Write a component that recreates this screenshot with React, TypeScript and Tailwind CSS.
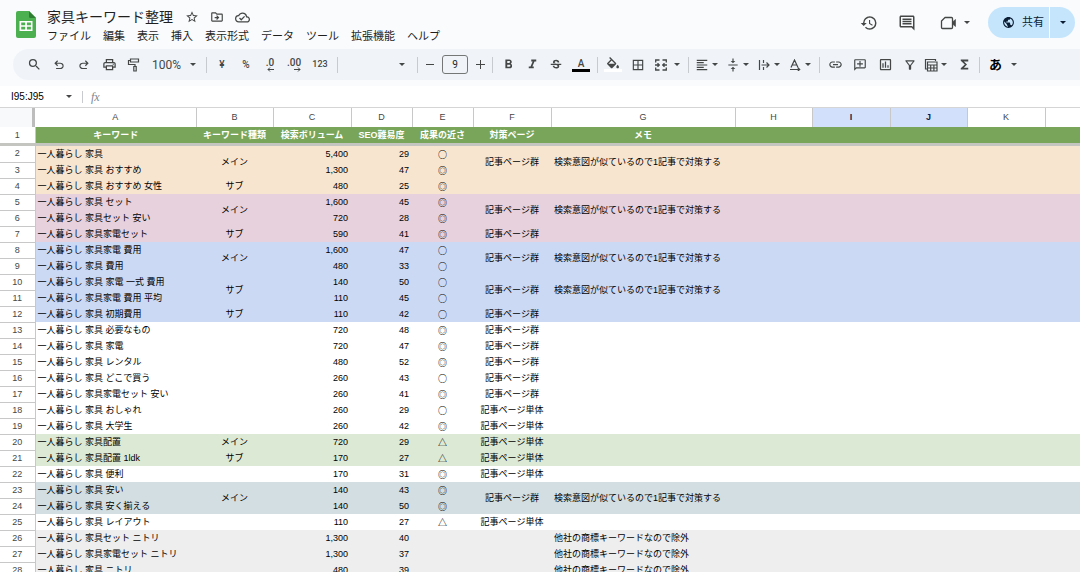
import type { ReactNode } from 'react';
import {
    MdBorderAll,
    MdFormatAlignLeft,
    MdFormatBold,
    MdFormatItalic,
    MdFunctions,
    MdHistory,
    MdLink,
    MdOutlineAddComment,
    MdOutlineCloudDone,
    MdOutlineComment,
    MdOutlineDriveFileMove,
    MdOutlineFilterAlt,
    MdOutlineInsertChart,
    MdOutlinePrint,
    MdPublic,
    MdSearch,
    MdStarBorder,
    MdStrikethroughS,
    MdVerticalAlignCenter,
} from 'react-icons/md';

const menus = ['ファイル', '編集', '表示', '挿入', '表示形式', 'データ', 'ツール', '拡張機能', 'ヘルプ'];

const columns = [
    { name: 'A', title: 'キーワード', width: 'w-[161px]' },
    { name: 'B', title: 'キーワード種類', width: 'w-[77px]' },
    { name: 'C', title: '検索ボリューム', width: 'w-[78px]' },
    { name: 'D', title: 'SEO難易度', width: 'w-[61px]' },
    { name: 'E', title: '成果の近さ', width: 'w-[61px]' },
    { name: 'F', title: '対策ページ', width: 'w-[78px]' },
    { name: 'G', title: 'メモ', width: 'w-[184px]' },
    { name: 'H', title: '', width: 'w-[77px]' },
    { name: 'I', title: '', width: 'w-[78px]' },
    { name: 'J', title: '', width: 'w-[77px]' },
    { name: 'K', title: '', width: 'w-[78px]' },
    { name: '', title: '', width: '' },
];

const SAME = '検索意図が似ているので1記事で対策する';
const BRAND = '他社の商標キーワードなので除外';

const ORANGE = 'bg-[#f8e5d0]';
const PINK = 'bg-[#e6d1dc]';
const BLUE = 'bg-[#ccd9f5]';
const WHITE = 'bg-white';
const GREEN = 'bg-[#dce9d5]';
const TEAL = 'bg-[#d2dee2]';
const GRAY = 'bg-[#eeeeee]';

type Row = {
    color: string;
    keyword: string;
    volume: string;
    difficulty: string;
    mark: string;
    // merge: 'start' spans two rows for kind / page / memo, 'end' is the covered row
    merge?: 'start' | 'end';
    kind?: string;
    page?: string;
    memo?: string;
};

const rows: Row[] = [
    { color: ORANGE, keyword: '一人暮らし 家具', volume: '5,400', difficulty: '29', mark: '○', merge: 'start', kind: 'メイン', page: '記事ページ群', memo: SAME },
    { color: ORANGE, keyword: '一人暮らし 家具 おすすめ', volume: '1,300', difficulty: '47', mark: '◎', merge: 'end' },
    { color: ORANGE, keyword: '一人暮らし 家具 おすすめ 女性', volume: '480', difficulty: '25', mark: '◎', kind: 'サブ' },
    { color: PINK, keyword: '一人暮らし 家具 セット', volume: '1,600', difficulty: '45', mark: '◎', merge: 'start', kind: 'メイン', page: '記事ページ群', memo: SAME },
    { color: PINK, keyword: '一人暮らし 家具セット 安い', volume: '720', difficulty: '28', mark: '◎', merge: 'end' },
    { color: PINK, keyword: '一人暮らし 家具家電セット', volume: '590', difficulty: '41', mark: '◎', kind: 'サブ', page: '記事ページ群' },
    { color: BLUE, keyword: '一人暮らし 家具家電 費用', volume: '1,600', difficulty: '47', mark: '○', merge: 'start', kind: 'メイン', page: '記事ページ群', memo: SAME },
    { color: BLUE, keyword: '一人暮らし 家具 費用', volume: '480', difficulty: '33', mark: '○', merge: 'end' },
    { color: BLUE, keyword: '一人暮らし 家具 家電 一式 費用', volume: '140', difficulty: '50', mark: '○', merge: 'start', kind: 'サブ', page: '記事ページ群', memo: SAME },
    { color: BLUE, keyword: '一人暮らし 家具家電 費用 平均', volume: '110', difficulty: '45', mark: '○', merge: 'end' },
    { color: BLUE, keyword: '一人暮らし 家具 初期費用', volume: '110', difficulty: '42', mark: '○', kind: 'サブ', page: '記事ページ群' },
    { color: WHITE, keyword: '一人暮らし 家具 必要なもの', volume: '720', difficulty: '48', mark: '◎', page: '記事ページ群' },
    { color: WHITE, keyword: '一人暮らし 家具 家電', volume: '720', difficulty: '47', mark: '◎', page: '記事ページ群' },
    { color: WHITE, keyword: '一人暮らし 家具 レンタル', volume: '480', difficulty: '52', mark: '◎', page: '記事ページ群' },
    { color: WHITE, keyword: '一人暮らし 家具 どこで買う', volume: '260', difficulty: '43', mark: '○', page: '記事ページ群' },
    { color: WHITE, keyword: '一人暮らし 家具家電セット 安い', volume: '260', difficulty: '41', mark: '◎', page: '記事ページ群' },
    { color: WHITE, keyword: '一人暮らし 家具 おしゃれ', volume: '260', difficulty: '29', mark: '○', page: '記事ページ単体' },
    { color: WHITE, keyword: '一人暮らし 家具 大学生', volume: '260', difficulty: '42', mark: '◎', page: '記事ページ単体' },
    { color: GREEN, keyword: '一人暮らし 家具配置', volume: '720', difficulty: '29', mark: '△', kind: 'メイン', page: '記事ページ単体' },
    { color: GREEN, keyword: '一人暮らし 家具配置 1ldk', volume: '170', difficulty: '27', mark: '△', kind: 'サブ', page: '記事ページ単体' },
    { color: WHITE, keyword: '一人暮らし 家具 便利', volume: '170', difficulty: '31', mark: '◎', page: '記事ページ単体' },
    { color: TEAL, keyword: '一人暮らし 家具 安い', volume: '140', difficulty: '43', mark: '◎', merge: 'start', kind: 'メイン', page: '記事ページ群', memo: SAME },
    { color: TEAL, keyword: '一人暮らし 家具 安く揃える', volume: '140', difficulty: '50', mark: '◎', merge: 'end' },
    { color: WHITE, keyword: '一人暮らし 家具 レイアウト', volume: '110', difficulty: '27', mark: '△', page: '記事ページ単体' },
    { color: GRAY, keyword: '一人暮らし 家具セット ニトリ', volume: '1,300', difficulty: '40', mark: '', memo: BRAND },
    { color: GRAY, keyword: '一人暮らし 家具家電セット ニトリ', volume: '1,300', difficulty: '37', mark: '', memo: BRAND },
    { color: GRAY, keyword: '一人暮らし 家具 ニトリ', volume: '480', difficulty: '39', mark: '', memo: BRAND },
];

function Caret() {
    return (
        <svg viewBox="0 0 6 3" className="w-1.5 h-[3px] shrink-0" fill="currentColor" aria-hidden="true">
            <path d="M0 0h6L3 3z" />
        </svg>
    );
}

function Divider() {
    return <span className="w-px h-4 mx-[3px] shrink-0 bg-[#c7cacf]" />;
}

function Tool({ label, children, width = 'w-6' }: { label: string; children: ReactNode; width?: string }) {
    return (
        <button aria-label={label} className={`${width} h-6 shrink-0 flex flex-col items-center justify-center`}>
            {children}
        </button>
    );
}

function DropTool({ label, children, gap = 'w-[31px]' }: { label: string; children: ReactNode; gap?: string }) {
    return (
        <button aria-label={label} className={`${gap} h-6 pl-px pr-[5px] shrink-0 flex items-center justify-between`}>
            <span className="w-[18px] flex justify-center">{children}</span>
            <Caret />
        </button>
    );
}

function Symbol({ d }: { d: string }) {
    return (
        <svg viewBox="0 -960 960 960" className="size-3.5" fill="currentColor" aria-hidden="true">
            <path d={d} />
        </svg>
    );
}

function Decimal({ text, right }: { text: string; right?: boolean }) {
    return (
        <span className="flex flex-col items-center text-[10px] leading-[9px] font-medium">
            {text}
            <svg viewBox="0 0 7 5" className={`w-[7px] h-[5px] self-end ${right ? '-scale-x-100' : ''}`} fill="none" stroke="currentColor" aria-hidden="true">
                <path d="M7 2.500H1M3 .5l-2 2 2 2" />
            </svg>
        </span>
    );
}

function SheetsLogo() {
    return (
        <svg viewBox="0 0 20 27" className="w-5 h-[27px] shrink-0" aria-hidden="true">
            <path fill="#4caf50" d="M2 0h11l7 7v18a2 2 0 0 1-2 2H2a2 2 0 0 1-2-2V2a2 2 0 0 1 2-2z" />
            <path fill="#2e7d32" d="M13 0l7 7h-5.500A1.500 1.500 0 0 1 13 5.500z" />
            <path fill="#fff" fillRule="evenodd" d="M3.500 10h13v10h-13zM5.200 11.600v2.600h4v-2.600zm5.700 0v2.600h4v-2.600zm-5.700 4.200v2.600h4v-2.600zm5.700 0v2.600h4v-2.600z" />
        </svg>
    );
}

function Header() {
    return (
        <header className="flex items-start justify-between h-[49px] pl-4 pr-[5px]">
            <div className="flex items-start gap-[11px] pt-2">
                <div className="pt-[3px]">
                    <SheetsLogo />
                </div>
                <div>
                    <div className="flex items-center h-[18px] text-[#444746]">
                        <h1 className="text-sm leading-[18px] text-[#1f1f1f] mr-3">家具キーワード整理</h1>
                        <div className="flex items-center gap-[11px]">
                            <button aria-label="スター"><MdStarBorder className="size-3.5" /></button>
                            <button aria-label="移動"><MdOutlineDriveFileMove className="size-3.5" /></button>
                            <button aria-label="保存済み"><MdOutlineCloudDone className="size-[15px]" /></button>
                        </div>
                    </div>
                    <nav className="flex gap-3 pt-0.5 text-[11px] leading-4 text-[#1f1f1f]">
                        {menus.map((menu) => (
                            <button key={menu} className="whitespace-nowrap">{menu}</button>
                        ))}
                    </nav>
                </div>
            </div>

            <div className="flex items-center pt-[7px] text-[#444746]">
                <button aria-label="変更履歴" className="mr-5"><MdHistory className="size-[18px]" /></button>
                <button aria-label="コメント" className="mr-6"><MdOutlineComment className="size-[18px]" /></button>
                <button aria-label="通話" className="flex items-center gap-[7px] mr-[18px]">
                    <svg viewBox="0 0 17 14" className="w-[17px] h-3.5" fill="none" stroke="currentColor" strokeWidth="1.300" aria-hidden="true">
                        <path d="M5 1.500h6.500a1 1 0 0 1 1 1v9a1 1 0 0 1-1 1h-9a1 1 0 0 1-1-1V5z" strokeLinejoin="round" />
                        <path d="M12.500 6L15.500 3.500v7l-3-2.500z" fill="currentColor" strokeWidth="0.600" />
                    </svg>
                    <Caret />
                </button>
                <div className="flex h-[31px] rounded-full overflow-hidden bg-[#c5e5fd] text-[#0b1d33]">
                    <button className="flex items-center gap-[7px] w-[61px] pl-3.5 text-[11px] whitespace-nowrap">
                        <MdPublic className="size-[13px] shrink-0" />
                        共有
                    </button>
                    <button aria-label="共有オプション" className="flex items-center justify-center w-[26px] border-l border-white">
                        <Caret />
                    </button>
                </div>
            </div>
        </header>
    );
}

function Toolbar() {
    return (
        <div className="flex items-center h-[31px] ml-[13px] pl-[9px] rounded-l-full bg-[#f0f4f9] text-[#444746] overflow-hidden">
            <div className="flex gap-px">
                <Tool label="検索"><MdSearch className="size-[15px]" /></Tool>
                <Tool label="元に戻す"><Symbol d="M280-200v-80h284q63 0 109.500-40T720-420q0-60-46.500-100T564-560H312l104 104-56 56-200-200 200-200 56 56-104 104h252q97 0 166.500 63T800-420q0 94-69.500 157T564-200H280Z" /></Tool>
                <Tool label="やり直し"><Symbol d="M396-200q-97 0-166.500-63T160-420q0-94 69.500-157T396-640h252L544-744l56-56 200 200-200 200-56-56 104-104H396q-63 0-109.500 40T240-420q0 60 46.500 100T396-280h284v80H396Z" /></Tool>
                <Tool label="印刷"><MdOutlinePrint className="size-[15px]" /></Tool>
                <Tool label="書式を貼り付け">
                    <svg viewBox="0 0 14 14" className="size-3.5" fill="none" stroke="currentColor" strokeWidth="1.200" aria-hidden="true">
                        <path d="M3.500 1h8v3h-8zM3.500 2.500H1.500v4H8v2M6.800 8.500h2.400v4.500H6.800z" />
                    </svg>
                </Tool>
            </div>
            <button className="flex items-center justify-between w-[57px] pl-1.5 pr-[7px] shrink-0 text-xs">
                100%
                <Caret />
            </button>
            <Divider />
            <Tool label="通貨"><span className="text-[10px] font-medium">¥</span></Tool>
            <Tool label="パーセント"><span className="text-[10px] font-medium">%</span></Tool>
            <Tool label="小数点以下の桁数を減らす"><Decimal text=".0" /></Tool>
            <Tool label="小数点以下の桁数を増やす"><Decimal text=".00" right /></Tool>
            <Tool label="表示形式の詳細" width="w-7"><span className="text-[9px] font-medium">123</span></Tool>
            <Divider />
            <button aria-label="フォント" className="flex items-center justify-end w-[73px] h-6 pr-[9px] shrink-0">
                <Caret />
            </button>
            <Divider />
            <Tool label="縮小" width="w-[18px]"><span className="w-2 h-px bg-[#444746]" /></Tool>
            <input aria-label="フォントサイズ" defaultValue="9" className="w-[26px] h-[19px] mx-[3px] shrink-0 rounded-[3px] border border-[#747775] text-center text-[10px] text-[#1f1f1f]" />
            <Tool label="拡大" width="w-[18px]">
                <svg viewBox="0 0 9 9" className="size-[9px]" stroke="currentColor" aria-hidden="true"><path d="M4.500 0v9M0 4.500h9" /></svg>
            </Tool>
            <Divider />
            <div className="flex">
                <Tool label="太字"><MdFormatBold className="size-[15px]" /></Tool>
                <Tool label="斜体"><MdFormatItalic className="size-[15px]" /></Tool>
                <Tool label="取り消し線"><MdStrikethroughS className="size-3.5" /></Tool>
                <Tool label="文字色" width="w-[26px]">
                    <span className="text-[10px] leading-[11px] font-medium">A</span>
                    <span className="w-[18px] h-[3px] bg-black" />
                </Tool>
            </div>
            <Divider />
            <div className="flex gap-px">
                <Tool label="塗りつぶし">
                    <svg viewBox="0 0 24 18" className="w-4 h-3" fill="currentColor" aria-hidden="true">
                        <path d="M16.560 8.940L7.620 0 6.210 1.410l2.380 2.380-5.150 5.150c-.59.59-.59 1.540 0 2.120l5.500 5.500c.29.29.68.44 1.060.44s.77-.15 1.060-.44l5.500-5.500c.59-.58.59-1.530 0-2.120zM5.210 10L10 5.210 14.790 10H5.210zM19 11.500s-2 2.170-2 3.500c0 1.100.9 2 2 2s2-.9 2-2c0-1.330-2-3.500-2-3.500z" />
                    </svg>
                    <span className="w-[18px] h-[3px] bg-white" />
                </Tool>
                <Tool label="枠線"><MdBorderAll className="size-3.5" /></Tool>
                <DropTool label="セルを結合" gap="w-[34px]">
                    <svg viewBox="0 0 14 14" className="size-3.5" fill="none" stroke="currentColor" strokeWidth="1.300" aria-hidden="true">
                        <path d="M5.500 2H1.700v2.500M8.500 2h3.800v2.500M5.500 12H1.700V9.500M8.500 12h3.800V9.500M1 7h4.300M3.500 5.200L5.300 7 3.500 8.800M13 7H8.700M10.500 5.200L8.700 7l1.800 1.800" />
                    </svg>
                </DropTool>
            </div>
            <Divider />
            <DropTool label="水平方向の配置"><MdFormatAlignLeft className="size-3.5" /></DropTool>
            <DropTool label="垂直方向の配置"><MdVerticalAlignCenter className="size-3.5" /></DropTool>
            <DropTool label="折り返し">
                <svg viewBox="0 0 12 12" className="size-3" fill="none" stroke="currentColor" strokeWidth="1.200" aria-hidden="true">
                    <path d="M1.500 1v10M5.500 1v3M5.500 8v3M3.500 6H11M8.500 3.500L11 6 8.500 8.500" />
                </svg>
            </DropTool>
            <DropTool label="回転">
                <svg viewBox="0 0 12 12" className="size-3" fill="none" stroke="currentColor" strokeWidth="1.200" aria-hidden="true">
                    <path d="M2 8.500L5.500 1 9 8.500M3.300 6h4.400M1 10.500h9.500M8.800 8.700l1.900 1.800-1.900 1.500" />
                </svg>
            </DropTool>
            <Divider />
            <div className="flex gap-px">
                <Tool label="リンク"><MdLink className="size-[15px]" /></Tool>
                <Tool label="コメントを追加"><MdOutlineAddComment className="size-3.5 -scale-x-100" /></Tool>
                <Tool label="グラフ"><MdOutlineInsertChart className="size-[15px]" /></Tool>
                <Tool label="フィルタ" width="w-[23px]"><MdOutlineFilterAlt className="size-3.5" /></Tool>
            </div>
            <DropTool label="テーブル表示">
                <svg viewBox="0 0 14 14" className="size-3.5" fill="none" stroke="currentColor" strokeWidth="1.200" aria-hidden="true">
                    <path d="M3 11H1.500V1.500h10V3M3.500 4h9.500v9H3.500zM3.500 7H13M3.500 10H13M6.700 7v6M9.900 7v6" />
                </svg>
            </DropTool>
            <Tool label="関数"><MdFunctions className="size-[15px]" /></Tool>
            <Divider />
            <button aria-label="入力ツール" className="flex items-center gap-[9px] pl-1.5 shrink-0">
                <span className="text-[13px] font-bold text-black">あ</span>
                <Caret />
            </button>
        </div>
    );
}

function Cell({ children, className = '', rowSpan }: { children?: ReactNode; className?: string; rowSpan?: number }) {
    return (
        <td rowSpan={rowSpan} className={`p-0 align-middle whitespace-nowrap ${className}`}>
            {children}
        </td>
    );
}

function Sheet() {
    return (
        <table className="w-full table-fixed border-collapse text-[9px] leading-[15px] text-black">
            <colgroup>
                <col className="w-8" />
                <col className="w-[3px]" />
                {columns.map((column, i) => (
                    <col key={i} className={column.width} />
                ))}
            </colgroup>
            <thead>
                <tr className="h-[19px] text-[#444746]">
                    <th className="bg-[#f8f9fa]" />
                    <th className="bg-[#bdbdbd]" />
                    {columns.map((column, i) => {
                        const selected = column.name === 'I' || column.name === 'J';
                        return (
                            <th
                                key={i}
                                className={`p-0 border-r border-[#c8c8c8] last:border-r-0 ${selected ? 'bg-[#d3e0fb] font-bold text-[#0b1d4a]' : 'bg-white font-normal'}`}
                            >
                                {column.name}
                            </th>
                        );
                    })}
                </tr>
                <tr className="h-4 text-white">
                    <th colSpan={2} className="p-0 bg-white border-r border-[#c8c8c8] font-normal text-[#444746]">1</th>
                    {columns.map((column, i) => (
                        <th key={i} className="p-0 bg-[#78a55a] font-bold whitespace-nowrap">{column.title}</th>
                    ))}
                </tr>
                <tr className="h-[3px]">
                    <th colSpan={14} className="p-0 bg-[#c4c4c0]" />
                </tr>
            </thead>
            <tbody>
                {rows.map((row, i) => {
                    const span = row.merge === 'start' ? 2 : 1;
                    return (
                        <tr key={i} className={`h-4 ${row.color}`}>
                            <th colSpan={2} className="p-0 bg-white border-r border-b border-[#c8c8c8] font-normal text-[#444746]">{i + 2}</th>
                            <Cell className="pl-0.5">{row.keyword}</Cell>
                            {row.merge !== 'end' && <Cell rowSpan={span} className="text-center">{row.kind}</Cell>}
                            <Cell className="pr-[3px] text-right">{row.volume}</Cell>
                            <Cell className="pr-[3px] text-right">{row.difficulty}</Cell>
                            <Cell className="text-center font-medium font-['Noto_Sans_CJK_JP',sans-serif]">{row.mark}</Cell>
                            {row.merge !== 'end' && <Cell rowSpan={span} className="text-center">{row.page}</Cell>}
                            {row.merge !== 'end' && <Cell rowSpan={span} className="pl-[3px]">{row.memo}</Cell>}
                            <td colSpan={5} />
                        </tr>
                    );
                })}
            </tbody>
        </table>
    );
}

export default function App() {
    return (
        <div
            lang="ja"
            className="h-screen overflow-hidden flex flex-col bg-[#f9fbfd] font-['Liberation_Sans','Noto_Sans_CJK_JP',sans-serif]"
        >
            <Header />
            <div className="font-[Roboto,'Noto_Sans_CJK_JP',sans-serif]">
                <Toolbar />
            </div>

            {/* Name box and formula bar */}
            <div className="flex items-center h-[21px] mt-1.5 shrink-0 bg-white">
                <input aria-label="名前ボックス" defaultValue="I95:J95" className="w-14 pl-[11px] text-[10px] text-black" />
                <button aria-label="名前付き範囲" className="w-[26px] h-5 flex items-center justify-center text-[#444746]">
                    <Caret />
                </button>
                <span className="w-px h-3 bg-[#c7cacf]" />
                <span className="pl-2 font-['Liberation_Serif',serif] italic text-xs text-[#80868b]">fx</span>
                <input aria-label="数式" className="flex-1 min-w-0" />
            </div>

            <main className="flex-1 min-h-0 overflow-hidden border-t border-[#d5d5d5] bg-white">
                <Sheet />
            </main>
        </div>
    );
}
